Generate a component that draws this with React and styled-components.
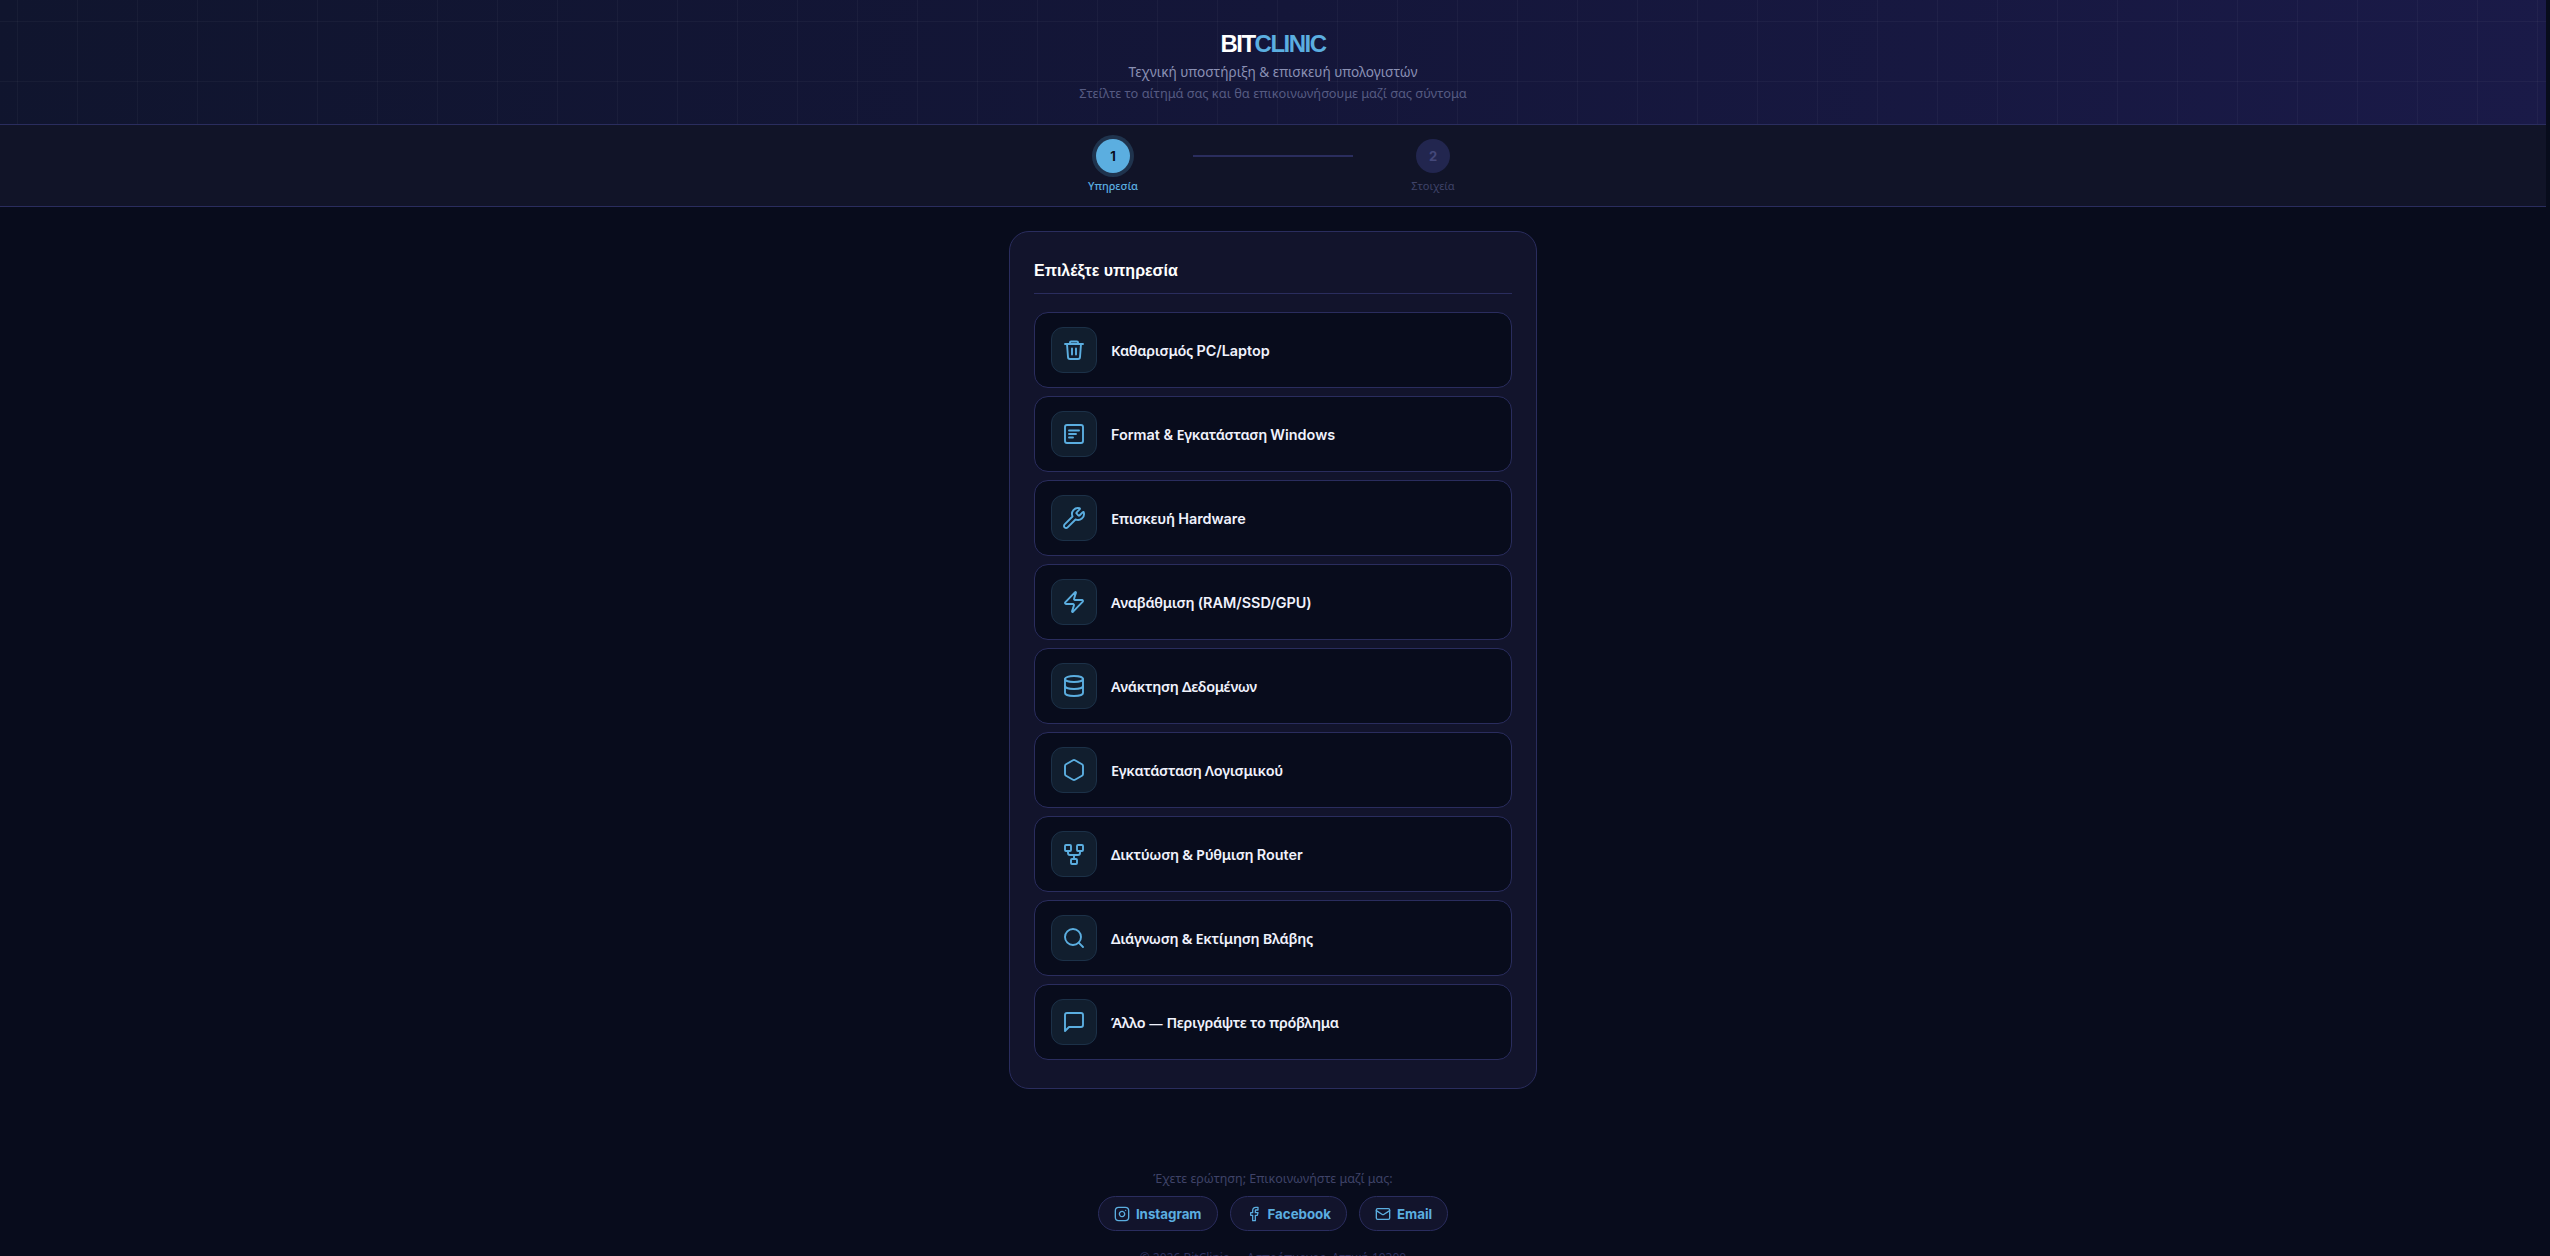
import React from 'react';
import styled, { createGlobalStyle } from 'styled-components';
import { Wrench, Zap, Database, Hexagon, Search, Instagram, Mail } from 'lucide-react';

const GlobalStyle = createGlobalStyle`
    html, body {
        margin: 0;
        padding: 0;
        height: 1256px;
        overflow: hidden;
        background: #080c1c;
    }
    * {
        box-sizing: border-box;
    }
`;

const Page = styled.div`
    width: 2546px;
    font-family: Inter, "Noto Sans", sans-serif;
    color: #e8eaf6;
`;

const Hero = styled.header`
    height: 125px;
    padding-top: 32px;
    border-bottom: 1px solid #2a2d5e;
    text-align: center;
    background-color: #12143a;
    background-image:
        linear-gradient(rgba(255, 255, 255, 0.035) 1px, transparent 1px),
        linear-gradient(90deg, rgba(255, 255, 255, 0.035) 1px, transparent 1px),
        linear-gradient(100deg, #10152e 0%, #141639 50%, #1a1a48 100%);
    background-size: 60px 60px, 60px 60px, 100% 100%;
    background-position: 17px 21px, 17px 21px, 0 0;
`;

const Logo = styled.div`
    font-family: "Liberation Sans", sans-serif;
    font-size: 24px;
    line-height: 24px;
    font-weight: 700;
    letter-spacing: -1.5px;
    color: #ffffff;
    span {
        color: #5baee0;
    }
`;

const Tagline = styled.p`
    margin: 6px 0 0;
    font-family: "Noto Sans", sans-serif;
    font-size: 13.6px;
    line-height: 20px;
    color: #8a90b4;
`;

const Subline = styled.p`
    margin: 2px 0 0;
    font-family: "Noto Sans", sans-serif;
    font-size: 12.8px;
    line-height: 18px;
    color: #565b82;
`;

const StepBar = styled.nav`
    height: 82px;
    display: flex;
    justify-content: center;
    align-items: flex-start;
    padding-top: 14px;
    border-bottom: 1px solid #2a2d5e;
    background: #111428;
`;

const Step = styled.div`
    width: 60px;
    display: flex;
    flex-direction: column;
    align-items: center;
    gap: 5px;
`;

const StepDot = styled.div`
    width: 34px;
    height: 34px;
    border-radius: 50%;
    display: flex;
    align-items: center;
    justify-content: center;
    font-size: 13px;
    font-weight: 700;
    background: ${(p) => (p.$active ? '#5baee0' : '#22264f')};
    color: ${(p) => (p.$active ? '#0a0e1f' : '#44487a')};
    box-shadow: ${(p) => (p.$active ? '0 0 0 4px rgba(91, 174, 224, 0.2)' : 'none')};
`;

const StepLabel = styled.span`
    font-family: "Noto Sans", sans-serif;
    font-size: 11px;
    line-height: 15px;
    font-weight: ${(p) => (p.$active ? 500 : 400)};
    color: ${(p) => (p.$active ? '#5baee0' : '#3f4368')};
    white-space: nowrap;
`;

const StepLine = styled.div`
    width: 160px;
    height: 2px;
    margin: 16px 50px 0;
    background: #2a2d5e;
`;

const Main = styled.main`
    width: 528px;
    margin: 24px auto 0;
`;

const Card = styled.section`
    height: 858px;
    padding: 28px 24px;
    border: 1px solid #2a2d5e;
    border-radius: 20px;
    background: #12142c;
`;

const CardTitle = styled.h2`
    margin: 0 0 18px;
    padding-bottom: 11px;
    border-bottom: 1px solid #2a2d5e;
    font-family: "Liberation Sans", sans-serif;
    font-size: 16px;
    line-height: 22px;
    font-weight: 700;
    color: #ffffff;
`;

const ServiceList = styled.div`
    display: flex;
    flex-direction: column;
    gap: 8px;
`;

const ServiceRow = styled.button`
    width: 100%;
    height: 76px;
    display: flex;
    align-items: center;
    gap: 14px;
    padding: 14px 16px;
    border: 1px solid #2a2d5e;
    border-radius: 14px;
    background: #080c1c;
    font-family: "Noto Sans", sans-serif;
    font-size: 14.4px;
    font-weight: 600;
    letter-spacing: -0.3px;
    color: #f0f2fc;
    text-align: left;
`;

const ServiceName = styled.span`
    white-space: pre;
`;

// latin parts of a name run a bit wider than the greek
const Latin = styled.span`
    font-family: Inter, sans-serif;
    font-weight: 600;
    letter-spacing: 0;
`;

const IconBox = styled.span`
    width: 46px;
    height: 46px;
    flex-shrink: 0;
    display: flex;
    align-items: center;
    justify-content: center;
    border: 1px solid #1c3148;
    border-radius: 12px;
    background: #111e2e;
    color: #5baee0;
`;

const Footer = styled.footer`
    margin-top: 81px;
    text-align: center;
`;

const FooterNote = styled.p`
    margin: 0 0 8px;
    font-family: "Noto Sans", sans-serif;
    font-size: 12.5px;
    line-height: 18px;
    color: #3f4368;
`;

const Links = styled.div`
    display: flex;
    justify-content: center;
    gap: 12px;
`;

const LinkPill = styled.a`
    height: 35px;
    display: flex;
    align-items: center;
    gap: 6px;
    padding: 0 15px;
    border: 1px solid #2a2d5e;
    border-radius: 18px;
    background: #12142c;
    font-size: 13.3px;
    font-weight: 700;
    color: #5baee0;
`;

const Copy = styled.p`
    margin: 19px 0 0;
    font-family: "Noto Sans", sans-serif;
    font-size: 12px;
    line-height: 16px;
    color: #2f3260;
`;

const Glyph = ({ size = 24, children }) => (
  <svg width={size} height={size} viewBox="0 0 24 24" fill="none" stroke="currentColor" strokeWidth="1.9" strokeLinecap="round" strokeLinejoin="round">
    {children}
  </svg>
);

const TrashIcon = () => (
  <Glyph>
    <path d="M3 6h18" />
    <path d="M8 6V4.5a1 1 0 0 1 1-1h6a1 1 0 0 1 1 1V6" />
    <path d="M19 6l-1 13a2 2 0 0 1-2 2H8a2 2 0 0 1-2-2L5 6" />
    <path d="M10 10.5v6M14 10.5v6" />
  </Glyph>
);

const FormatIcon = () => (
  <Glyph>
    <rect x="3" y="3" width="18" height="18" rx="2" />
    <path d="M7 8.5h10M7 12h7M7 15.5h4" />
  </Glyph>
);

const NetworkIcon = () => (
  <Glyph>
    <rect x="3" y="3" width="6" height="6" rx="1" />
    <rect x="15" y="3" width="6" height="6" rx="1" />
    <rect x="9" y="17" width="6" height="5" rx="1" />
    <path d="M6 9v2a2 2 0 0 0 2 2h8a2 2 0 0 0 2-2V9M12 13v4" />
  </Glyph>
);

const MessageIcon = () => (
  <Glyph>
    <path d="M21 15a2 2 0 0 1-2 2H7l-4 4V5a2 2 0 0 1 2-2h14a2 2 0 0 1 2 2z" />
  </Glyph>
);

const FacebookIcon = () => (
  <Glyph size={16}>
    <path d="M18 2h-3a5 5 0 0 0-5 5v3H7v4h3v8h4v-8h3l1-4h-4V7a1 1 0 0 1 1-1h3z" />
  </Glyph>
);

const services = [
  { id: 'cleaning', name: <>Καθαρισμός <Latin>PC/Laptop</Latin></>, icon: <TrashIcon /> },
  { id: 'format', name: <><Latin>Format &amp;</Latin> Εγκατάσταση <Latin>Windows</Latin></>, icon: <FormatIcon /> },
  { id: 'hardware', name: <>Επισκευή <Latin>Hardware</Latin></>, icon: <Wrench size={24} strokeWidth={1.9} /> },
  { id: 'upgrade', name: <>Αναβάθμιση <Latin>(RAM/SSD/GPU)</Latin></>, icon: <Zap size={24} strokeWidth={1.9} /> },
  { id: 'recovery', name: 'Ανάκτηση Δεδομένων', icon: <Database size={24} strokeWidth={1.9} /> },
  { id: 'software', name: 'Εγκατάσταση Λογισμικού', icon: <Hexagon size={24} strokeWidth={1.9} /> },
  { id: 'network', name: <>Δικτύωση &amp; Ρύθμιση <Latin>Router</Latin></>, icon: <NetworkIcon /> },
  { id: 'diagnosis', name: 'Διάγνωση & Εκτίμηση Βλάβης', icon: <Search size={24} strokeWidth={1.9} /> },
  { id: 'other', name: 'Άλλο — Περιγράψτε το πρόβλημα', icon: <MessageIcon /> },
];

const App = () => (
  <Page>
    <GlobalStyle />
    <Hero>
      <Logo>BIT<span>CLINIC</span></Logo>
      <Tagline>Τεχνική υποστήριξη &amp; επισκευή υπολογιστών</Tagline>
      <Subline>Στείλτε το αίτημά σας και θα επικοινωνήσουμε μαζί σας σύντομα</Subline>
    </Hero>
    <StepBar>
      <Step>
        <StepDot $active>1</StepDot>
        <StepLabel $active>Υπηρεσία</StepLabel>
      </Step>
      <StepLine />
      <Step>
        <StepDot>2</StepDot>
        <StepLabel>Στοιχεία</StepLabel>
      </Step>
    </StepBar>
    <Main>
      <Card>
        <CardTitle>Επιλέξτε υπηρεσία</CardTitle>
        <ServiceList>
          {services.map((service) => (
            <ServiceRow key={service.id}>
              <IconBox>{service.icon}</IconBox>
              <ServiceName>{service.name}</ServiceName>
            </ServiceRow>
          ))}
        </ServiceList>
      </Card>
    </Main>
    <Footer>
      <FooterNote>Έχετε ερώτηση; Επικοινωνήστε μαζί μας:</FooterNote>
      <Links>
        <LinkPill><Instagram size={16} />Instagram</LinkPill>
        <LinkPill><FacebookIcon />Facebook</LinkPill>
        <LinkPill><Mail size={16} />Email</LinkPill>
      </Links>
      <Copy>© 2026 BitClinic — Ασπρόπυργος, Αττική 19300</Copy>
    </Footer>
  </Page>
);

export default App;
